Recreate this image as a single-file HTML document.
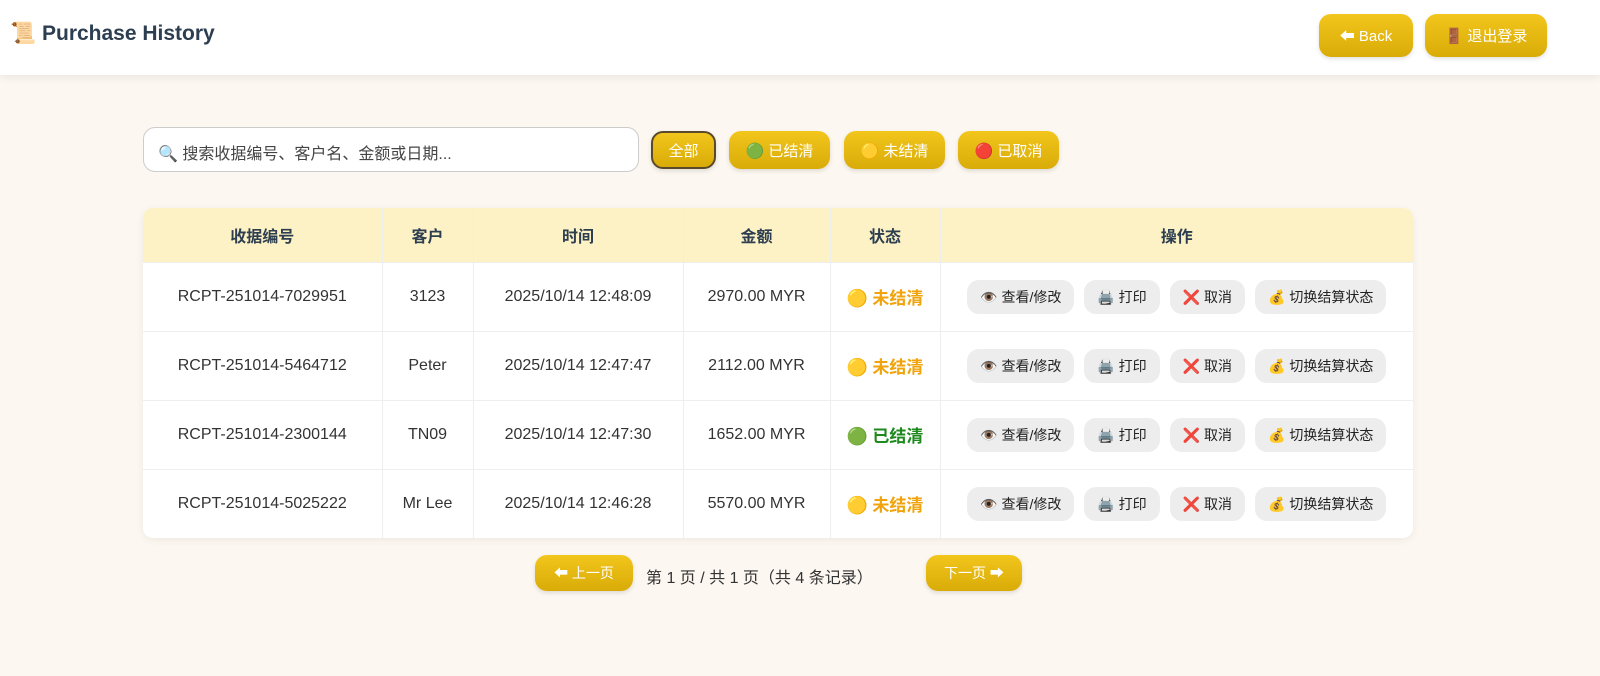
<!DOCTYPE html>
<html><head><meta charset="utf-8"><style>
*{box-sizing:border-box;margin:0;padding:0}
body{width:1600px;height:676px;background:#fcf7f0;font-family:"Liberation Sans","Noto Sans CJK SC",sans-serif;color:#2c3e50;position:relative;overflow:hidden}
.hdr{position:absolute;left:0;top:0;width:1600px;height:75px;background:#fff;box-shadow:0 2px 8px rgba(0,0,0,.08)}
.title{position:absolute;left:10px;top:22px;font-size:21px;font-weight:bold;color:#2c3e50}
.yb{position:absolute;background:linear-gradient(#f2c61c,#d9ab08);color:#fff;border-radius:12px;font-size:15px;display:flex;align-items:center;justify-content:center;box-shadow:0 2px 4px rgba(0,0,0,.12)}
.search{position:absolute;left:143px;top:127px;width:496px;height:45px;border:1px solid #ccc;border-radius:12px;background:#fff;font-size:16px;color:#444;padding:12px 0 0 14px}
table{position:absolute;left:143px;top:208px;width:1270px;border-collapse:collapse;background:#fff;border-radius:10px;overflow:hidden;box-shadow:0 2px 8px rgba(0,0,0,.06)}
th{background:#fdf2c6;height:54px;font-size:16px;font-weight:bold;color:#2c3e50;border-right:1px solid #eee}
td{height:69px;text-align:center;font-size:16px;color:#333;border-top:1px solid #eee;border-right:1px solid #eee}
th:last-child,td:last-child{border-right:none}
.st{font-weight:bold;font-size:17px}
.ab{display:inline-block;background:#ededed;border-radius:12px;height:34px;line-height:34px;padding:0 13px;font-size:14px;color:#222;margin:0 5px}
.pg{position:absolute;top:564px;left:646px;font-size:16px;color:#333}
</style></head><body>
<div class="hdr"><div class="title">📜 Purchase History</div>
<div class="yb" style="left:1319px;top:14px;width:94px;height:43px">⬅ Back</div>
<div class="yb" style="left:1425px;top:14px;width:122px;height:43px">🚪 退出登录</div></div>
<div class="search">🔍 搜索收据编号、客户名、金额或日期...</div>
<div class="yb" style="left:651px;top:131px;width:65px;height:38px;border:2px solid #5a4a2a">全部</div>
<div class="yb" style="left:729px;top:131px;width:101px;height:38px">🟢 已结清</div>
<div class="yb" style="left:844px;top:131px;width:101px;height:38px">🟡 未结清</div>
<div class="yb" style="left:958px;top:131px;width:101px;height:38px">🔴 已取消</div>
<table>
<tr><th style="width:239px">收据编号</th><th style="width:91px">客户</th><th style="width:210px">时间</th><th style="width:147px">金额</th><th style="width:110px">状态</th><th>操作</th></tr>
<tr><td>RCPT-251014-7029951</td><td>3123</td><td>2025/10/14 12:48:09</td><td>2970.00 MYR</td><td class="st" style="color:#f0a30a">🟡 未结清</td><td><span class="ab">👁️ 查看/修改</span><span class="ab">🖨️ 打印</span><span class="ab">❌ 取消</span><span class="ab">💰 切换结算状态</span></td></tr>
<tr><td>RCPT-251014-5464712</td><td>Peter</td><td>2025/10/14 12:47:47</td><td>2112.00 MYR</td><td class="st" style="color:#f0a30a">🟡 未结清</td><td><span class="ab">👁️ 查看/修改</span><span class="ab">🖨️ 打印</span><span class="ab">❌ 取消</span><span class="ab">💰 切换结算状态</span></td></tr>
<tr><td>RCPT-251014-2300144</td><td>TN09</td><td>2025/10/14 12:47:30</td><td>1652.00 MYR</td><td class="st" style="color:#1e8a1e">🟢 已结清</td><td><span class="ab">👁️ 查看/修改</span><span class="ab">🖨️ 打印</span><span class="ab">❌ 取消</span><span class="ab">💰 切换结算状态</span></td></tr>
<tr><td>RCPT-251014-5025222</td><td>Mr Lee</td><td>2025/10/14 12:46:28</td><td>5570.00 MYR</td><td class="st" style="color:#f0a30a">🟡 未结清</td><td><span class="ab">👁️ 查看/修改</span><span class="ab">🖨️ 打印</span><span class="ab">❌ 取消</span><span class="ab">💰 切换结算状态</span></td></tr>
</table>
<div class="yb" style="left:535px;top:555px;width:98px;height:36px;font-size:14px">⬅ 上一页</div>
<div class="pg">第 1 页 / 共 1 页（共 4 条记录）</div>
<div class="yb" style="left:926px;top:555px;width:96px;height:36px;font-size:14px">下一页 ➡</div>
</body></html>
